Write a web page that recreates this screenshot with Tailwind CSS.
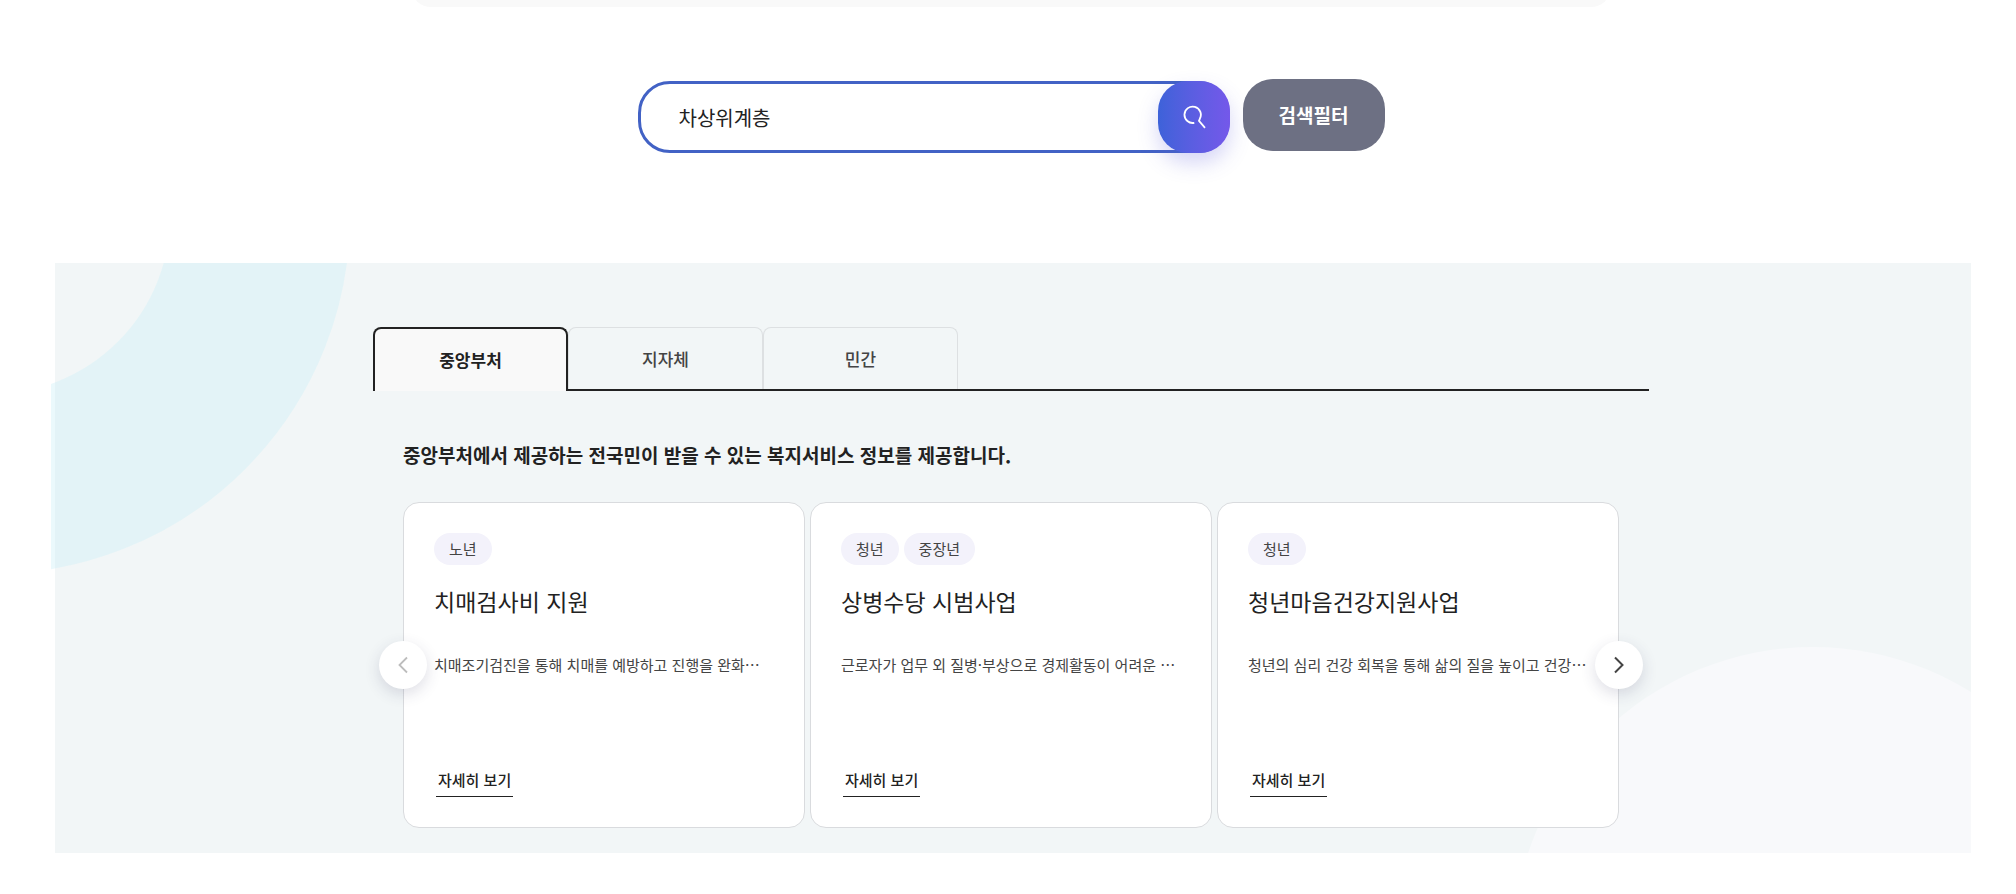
<!DOCTYPE html>
<html lang="ko">
<head>
<meta charset="utf-8">
<meta name="viewport" content="width=device-width, initial-scale=1">
<title>복지서비스 검색</title>
<script src="https://cdn.jsdelivr.net/npm/@tailwindcss/browser@4"></script>
</head>
<body class="bg-white font-['Noto_Sans_CJK_KR',sans-serif] text-[#222] overflow-x-hidden">
<main class="pl-[51px] pr-[45px]">
  <div class="mx-auto h-[7px] max-w-[1200px] overflow-hidden flex items-end" aria-hidden="true">
    <div class="h-10 w-full shrink-0 rounded-[20px] bg-[#f9f9f9]"></div>
  </div>

  <form class="mt-[72px] flex justify-center gap-[13px]" role="search">
    <div class="mt-[2px] flex h-[72px] w-[592px] rounded-[32px] border-[3px] border-[#4262c5]">
      <input type="text" aria-label="검색어" value="차상위계층" class="min-w-0 flex-1 bg-transparent pt-[2px] pl-[38px] text-xl outline-none">
      <button type="button" aria-label="검색" class="-m-[3px] flex size-[72px] shrink-0 items-center justify-center rounded-[30px] bg-linear-to-r from-[#3d62d9] to-[#7458ea] shadow-[0_10px_20px_rgba(90,90,220,0.25)]">
        <svg class="size-6" viewBox="0 0 24 24" fill="none" stroke="#fff" stroke-width="1.8"><path d="M12.300 17.800A8.200 8.200 0 1 1 17.800 13.800L17 15.800 23 22.800"/></svg>
      </button>
    </div>
    <button type="button" class="h-[72px] w-[142px] rounded-[30px] bg-[#6d7083] text-[19px] font-bold text-white">검색필터</button>
  </form>

  <section class="relative mt-[110px] h-[590px]">
    <div class="absolute inset-y-0 right-0 left-1 overflow-hidden bg-[#f2f6f7]" aria-hidden="true">
      <div class="absolute top-[384px] -right-[142px] size-[600px] rounded-full bg-[#f8f9fb]"></div>
    </div>
    <svg class="absolute top-0 left-0 h-[320px] w-[310px]" viewBox="0 0 310 320" fill="none" aria-hidden="true"><circle cx="-59" cy="-47" r="268" stroke="#cef1f7" stroke-opacity="0.4" stroke-width="180"/></svg>

    <div class="relative mx-auto max-w-[1276px] pt-16">
      <div role="tablist" class="flex h-16 text-[17px]">
        <button role="tab" aria-selected="true" class="w-[195px] rounded-t-lg border-2 border-b-0 border-[#222] bg-[#f9f9f9] font-bold">중앙부처</button>
        <div class="flex flex-1 border-b-2 border-[#222]">
          <button role="tab" aria-selected="false" class="w-[195px] rounded-t-lg border border-b-0 border-[#dde0e2] font-medium text-[#444]">지자체</button>
          <button role="tab" aria-selected="false" class="w-[195px] rounded-t-lg border border-b-0 border-[#dde0e2] font-medium text-[#444]">민간</button>
        </div>
      </div>

      <div class="px-[30px]">
        <h2 class="pt-12 text-[19px] leading-8 font-bold">중앙부처에서 제공하는 전국민이 받을 수 있는 복지서비스 정보를 제공합니다.</h2>
        <div class="relative mt-[31px]">
          <ul class="grid grid-cols-3 gap-[5px]">
            <li class="flex h-[326px] flex-col items-start rounded-2xl border border-[#d9dbde] bg-white p-[30px]">
              <div class="flex gap-[5px] text-[15px] leading-8 text-[#444]"><span class="rounded-full bg-[#f3f2fb] px-[15px]">노년</span></div>
              <h3 class="mt-5 text-[23px] leading-8">치매검사비 지원</h3>
              <p class="mt-9 text-[15px] leading-6 whitespace-nowrap text-[#444]">치매조기검진을 통해 치매를 예방하고 진행을 완화…</p>
              <a href="#" class="mt-auto ml-[2px] border-b border-[#222] px-[2px] text-[15px] leading-8 font-medium">자세히 보기</a>
            </li>
            <li class="flex h-[326px] flex-col items-start rounded-2xl border border-[#d9dbde] bg-white p-[30px]">
              <div class="flex gap-[5px] text-[15px] leading-8 text-[#444]"><span class="rounded-full bg-[#f3f2fb] px-[15px]">청년</span><span class="rounded-full bg-[#f3f2fb] px-[15px]">중장년</span></div>
              <h3 class="mt-5 text-[23px] leading-8">상병수당 시범사업</h3>
              <p class="mt-9 text-[15px] leading-6 whitespace-nowrap text-[#444]">근로자가 업무 외 질병·부상으로 경제활동이 어려운 …</p>
              <a href="#" class="mt-auto ml-[2px] border-b border-[#222] px-[2px] text-[15px] leading-8 font-medium">자세히 보기</a>
            </li>
            <li class="flex h-[326px] flex-col items-start rounded-2xl border border-[#d9dbde] bg-white p-[30px]">
              <div class="flex gap-[5px] text-[15px] leading-8 text-[#444]"><span class="rounded-full bg-[#f3f2fb] px-[15px]">청년</span></div>
              <h3 class="mt-5 text-[23px] leading-8">청년마음건강지원사업</h3>
              <p class="mt-9 text-[15px] leading-6 whitespace-nowrap text-[#444]">청년의 심리 건강 회복을 통해 삶의 질을 높이고 건강…</p>
              <a href="#" class="mt-auto ml-[2px] border-b border-[#222] px-[2px] text-[15px] leading-8 font-medium">자세히 보기</a>
            </li>
          </ul>
          <button type="button" aria-label="이전" class="absolute top-1/2 -left-6 flex size-12 -translate-y-1/2 items-center justify-center rounded-full bg-white text-[#bdbdbd] shadow-[0_5px_15px_rgba(50,50,93,0.16)]">
            <svg class="size-6" viewBox="0 0 24 24" fill="none" stroke="currentColor" stroke-width="1.8"><path d="M16 4.500 8.500 12l7.500 7.500"/></svg>
          </button>
          <button type="button" aria-label="다음" class="absolute top-1/2 -right-6 flex size-12 -translate-y-1/2 items-center justify-center rounded-full bg-white text-[#444] shadow-[0_5px_15px_rgba(50,50,93,0.16)]">
            <svg class="size-6" viewBox="0 0 24 24" fill="none" stroke="currentColor" stroke-width="2"><path d="M8 4.500 15.500 12 8 19.500"/></svg>
          </button>
        </div>
      </div>
    </div>
  </section>
</main>
</body>
</html>
